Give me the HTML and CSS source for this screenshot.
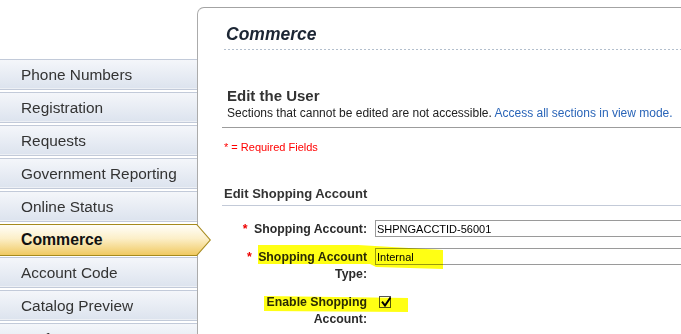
FILE: index.html
```html
<!DOCTYPE html>
<html lang="en">
<head>
  <meta charset="UTF-8">
  <meta name="viewport" content="width=device-width, initial-scale=1.0">
  <title>Edit User - Commerce</title>
  <link rel="stylesheet" href="styles.css">
</head>
<body>

<div class="page">
  <ul class="tabs">
    <li class="tab">Phone Numbers</li>
    <li class="tab">Registration</li>
    <li class="tab">Requests</li>
    <li class="tab">Government Reporting</li>
    <li class="tab">Online Status</li>
    <li class="tab active"><span>Commerce</span></li>
    <li class="tab">Account Code</li>
    <li class="tab">Catalog Preview</li>
    <li class="tab">Preferences</li>
  </ul>

  <div class="panel">
    <h1 class="title">Commerce</h1>
    <div class="dots"></div>

    <div class="intro">
      <h2>Edit the User</h2>
      <p>Sections that cannot be edited are not accessible. <a href="#">Access all sections in view mode.</a></p>
    </div>

    <p class="required">* = Required Fields</p>

    <h3 class="section">Edit Shopping Account</h3>

    <form class="form" id="shoppingForm">
      <div class="row">
        <label for="account"><span class="star">*</span> Shopping Account:</label>
        <div class="field">
          <input class="input" type="text" id="account" value="SHPNGACCTID-56001">
        </div>
      </div>

      <div class="row">
        <label for="accountType"><span class="star">*</span> Shopping Account Type:</label>
        <div class="field">
          <input class="input" type="text" id="accountType" value="Internal">
        </div>
        <div class="hl hl-type"></div>
      </div>

      <div class="row">
        <label>Enable Shopping Account:</label>
        <div class="field">
          <span class="check">
            <svg width="10" height="10" viewBox="0 0 10 10"><path d="M1 4.6 L4 8.6 L9.4 0.6" fill="none" stroke="#000" stroke-width="1.9"/></svg>
          </span>
        </div>
        <div class="hl hl-enable"></div>
      </div>
    </form>
  </div>
</div>

</body>
</html>
```

FILE: styles.css
```css
html, body {
  margin: 0;
  overflow: hidden;
}
body {
  font-family: "Liberation Sans", Arial, sans-serif;
  color: #333;
  background: #fff;
}
.page {
  display: flex;
  align-items: flex-start;
  height: 334px;
  overflow: hidden;
}

/* left tabs */
.tabs {
  flex: none;
  width: 197px;
  margin: 0;
  padding: 59px 0 0;
  list-style: none;
}
.tab {
  height: 29px;
  line-height: 29px;
  padding-left: 21px;
  margin-bottom: 2px;
  font-size: 15.4px;
  color: #333;
  border-top: 1px solid #c2cad9;
  border-bottom: 1px solid #c2cad9;
  background: linear-gradient(#f4f6fa, #dce3ee);
  box-shadow: inset 0 -1px 0 #edf0f5;
}
.tab.active {
  position: relative;
  z-index: 1;
  width: 211px;
  height: 30px;
  padding: 1px 0;
  margin-bottom: 1px;
  border: 0;
  box-shadow: none;
  background: #a68a1c;
  clip-path: polygon(0 0, 197px 0, 211px 50%, 197px 100%, 0 100%);
}
.tab.active span {
  display: block;
  height: 30px;
  line-height: 30px;
  padding-left: 21px;
  font-size: 15.8px;
  font-weight: bold;
  color: #111;
  background: linear-gradient(#fffef9, #fcefc8 45%, #f0c961);
  clip-path: polygon(0 0, 196.5px 0, 209.6px 50%, 196.5px 100%, 0 100%);
}

/* main panel */
.panel {
  flex: 1;
  min-width: 0;
  height: 340px;
  margin-top: 7px;
  padding-left: 24px;
  border-top: 1px solid #a3a3a3;
  border-left: 1px solid #ababab;
  border-top-left-radius: 7px;
  overflow: hidden;
}
.title {
  margin: 16px 0 5px;
  padding-left: 4px;
  font-size: 17.5px;
  line-height: 20px;
  font-style: italic;
  font-weight: bold;
  color: #1c2634;
}
.dots {
  height: 1px;
  margin-left: 2px;
  background: repeating-linear-gradient(to right, #b3bfcd 0 2px, transparent 2px 4px);
}
.intro {
  margin-top: 37px;
  padding: 0 0 7px 5px;
  border-bottom: 1px solid #9c9c9c;
}
.intro h2 {
  margin: 0 0 1px;
  font-size: 15px;
  line-height: 18px;
  color: #333;
}
.intro p {
  margin: 0;
  font-size: 12px;
  line-height: 14px;
  color: #222;
  white-space: nowrap;
}
.intro a {
  color: #2a65b8;
  text-decoration: none;
}
.required {
  margin: 13px 0 0;
  padding-left: 2px;
  font-size: 11px;
  line-height: 13px;
  color: #f00;
}
.section {
  margin: 32px 0 0;
  padding: 0 0 3px 2px;
  font-size: 13px;
  line-height: 16px;
  color: #333;
  border-bottom: 1px solid #c3cad8;
}

/* form */
.form {
  display: grid;
  row-gap: 10px;
  margin-top: 14px;
}
.row {
  position: relative;
  display: grid;
  grid-template-columns: 145px 1fr;
  column-gap: 8px;
}
.row label {
  padding: 1px 0 0 5px;
  text-align: right;
  font-size: 12.3px;
  line-height: 17px;
  font-weight: bold;
  color: #2b2b2b;
}
.star {
  margin-right: 3px;
  color: #e00;
}
.input {
  display: block;
  box-sizing: border-box;
  width: 340px;
  height: 17px;
  padding: 0 1px;
  border: 1px solid #9a9a9a;
  font: 11px "Liberation Sans", Arial, sans-serif;
  color: #000;
  background: #fff;
}
.check {
  display: block;
  box-sizing: border-box;
  width: 12px;
  height: 12px;
  margin: 3px 0 0 4px;
  padding: 0 0 0 0.5px;
  border: 1px solid #555;
  background: #fff;
}
.check svg {
  display: block;
}

/* highlighter marks */
.hl {
  position: absolute;
  background: #ffff14;
  mix-blend-mode: multiply;
  pointer-events: none;
}
.hl-type {
  left: 36px;
  top: -3px;
  width: 185px;
  height: 24px;
  clip-path: polygon(0 0, 100px 0, 185px 5px, 185px 24px, 118px 22px, 112px 19px, 0 19px);
}
.hl-enable {
  left: 42px;
  top: 3px;
  width: 144px;
  height: 16px;
  clip-path: polygon(0 0, 144px 2px, 144px 16px, 0 15px);
}
```
